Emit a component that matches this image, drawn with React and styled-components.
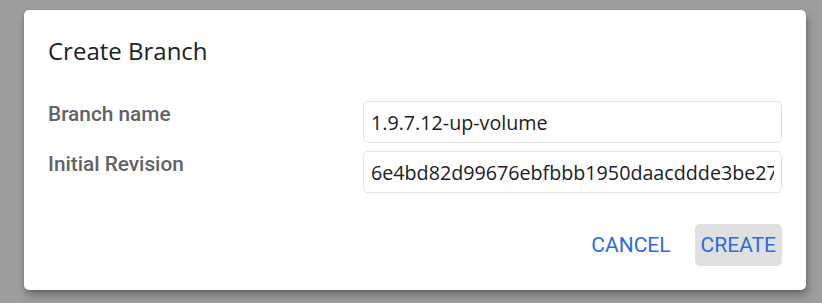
import styled, { createGlobalStyle } from "styled-components";

const GlobalStyle = createGlobalStyle`
  html, body {
    margin: 0;
    padding: 0;
    background: #9e9e9e;
  }
  * {
    box-sizing: border-box;
  }
`;

const Backdrop = styled.div`
  width: 822px;
  height: 303px;
  padding: 10px 16px 13px 24px;
  background: #9e9e9e;
`;

const Dialog = styled.div`
  width: 782px;
  height: 280px;
  background: #ffffff;
  border-radius: 5px;
  padding: 24px;
  display: flex;
  flex-direction: column;
  box-shadow: 2px 6px 10px rgba(0, 0, 0, 0.28), 0 1px 3px rgba(0, 0, 0, 0.2);
`;

const Title = styled.h2`
  margin: 2px 0 0;
  font-family: "Open Sans", sans-serif;
  font-weight: 400;
  font-size: 24px;
  line-height: 30px;
  color: #202124;
`;

const Form = styled.div`
  margin-top: 35px;
  display: grid;
  grid-template-columns: 315px 1fr;
  row-gap: 8px;
`;

const Label = styled.label`
  padding-top: 1px;
  font-family: Roboto, sans-serif;
  font-weight: 500;
  font-size: 20.8px;
  line-height: 24px;
  color: #5f6368;
`;

const Input = styled.input`
  width: 419px;
  height: 42px;
  padding: 0 7px;
  border: 1px solid #e3e3e3;
  border-radius: 5px;
  font-family: "Open Sans", sans-serif;
  font-size: 19.7px;
  color: #202124;
  background: #fff;
  outline: none;
`;

const Actions = styled.div`
  margin-top: auto;
  display: flex;
  justify-content: flex-end;
  gap: 18px;
`;

const Button = styled.button`
  height: 42px;
  padding: 0 6px;
  border: none;
  border-radius: 5px;
  background: ${(p) => (p.$focused ? "#e0e0e0" : "transparent")};
  font-family: Roboto, sans-serif;
  font-weight: 400;
  font-size: 21px;
  color: #2a6ce0;
  cursor: pointer;
`;

export default function App() {
  return (
    <>
      <GlobalStyle />
      <Backdrop>
        <Dialog>
          <Title>Create Branch</Title>
          <Form>
            <Label>Branch name</Label>
            <Input defaultValue="1.9.7.12-up-volume" />
            <Label>Initial Revision</Label>
            <Input defaultValue="6e4bd82d99676ebfbbb1950daacddde3be27c1f0" />
          </Form>
          <Actions>
            <Button>CANCEL</Button>
            <Button $focused>CREATE</Button>
          </Actions>
        </Dialog>
      </Backdrop>
    </>
  );
}
